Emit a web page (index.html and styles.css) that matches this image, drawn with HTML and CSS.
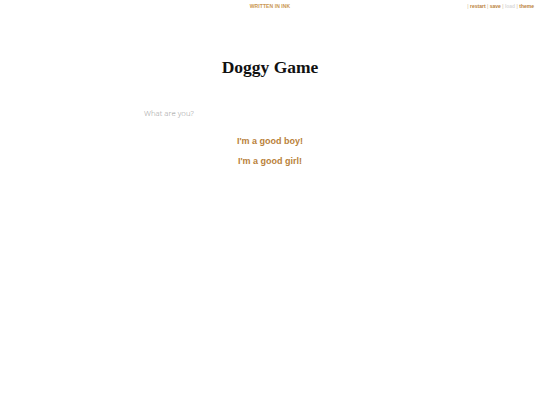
FILE: index.html
```html
<!DOCTYPE html>
<html>
<head>
<meta charset="utf-8">
<link rel="stylesheet" href="styles.css">
</head>
<body>
<div class="topbar">
  <div class="byline">WRITTEN IN INK</div>
  <div class="controls"><span class="sep">|</span> <a class="ctl">restart</a> <span class="sep">|</span> <a class="ctl">save</a> <span class="sep">|</span> <a class="ctl off">load</a> <span class="sep">|</span> <a class="ctl">theme</a></div>
</div>
<div class="story">
  <h1 class="title">Doggy Game</h1>
  <p class="text">What are you?</p>
  <div class="choices">
    <a class="choice">I'm a good boy!</a>
    <a class="choice">I'm a good girl!</a>
  </div>
</div>
</body>
</html>
```
FILE: styles.css
```css
html, body { margin: 0; padding: 0; background: #fff; }
body { font-family: "Liberation Sans", Arial, sans-serif; }
.topbar { position: relative; height: 12px; }
.byline { text-align: center; font-size: 5px; font-weight: bold; color: #c9964f; padding-top: 3px; letter-spacing: 0.1px; }
.controls { position: absolute; right: 6px; top: 3px; font-size: 5px; font-weight: bold; color: #c9964f; }
.ctl { color: #b9813a; }
.ctl.off { color: #d9d9d9; }
.sep { color: #d0b48a; font-weight: normal; }
.story { width: 252px; margin: 0 auto; padding-top: 44px; }
.title { font-family: "Liberation Serif", serif; font-weight: bold; font-size: 17.5px; text-align: center; margin: 0; color: #111; line-height: 22px; }
.text { font-family: "Open Sans", sans-serif; font-weight: 300; font-size: 7.8px; color: #999; margin: 29px 0 0 0; line-height: 12px; }
.choices { display: flex; flex-direction: column; align-items: center; gap: 8px; margin-top: 16px; }
.choice { font-weight: bold; font-size: 9px; color: #b9813a; line-height: 12px; }
```
